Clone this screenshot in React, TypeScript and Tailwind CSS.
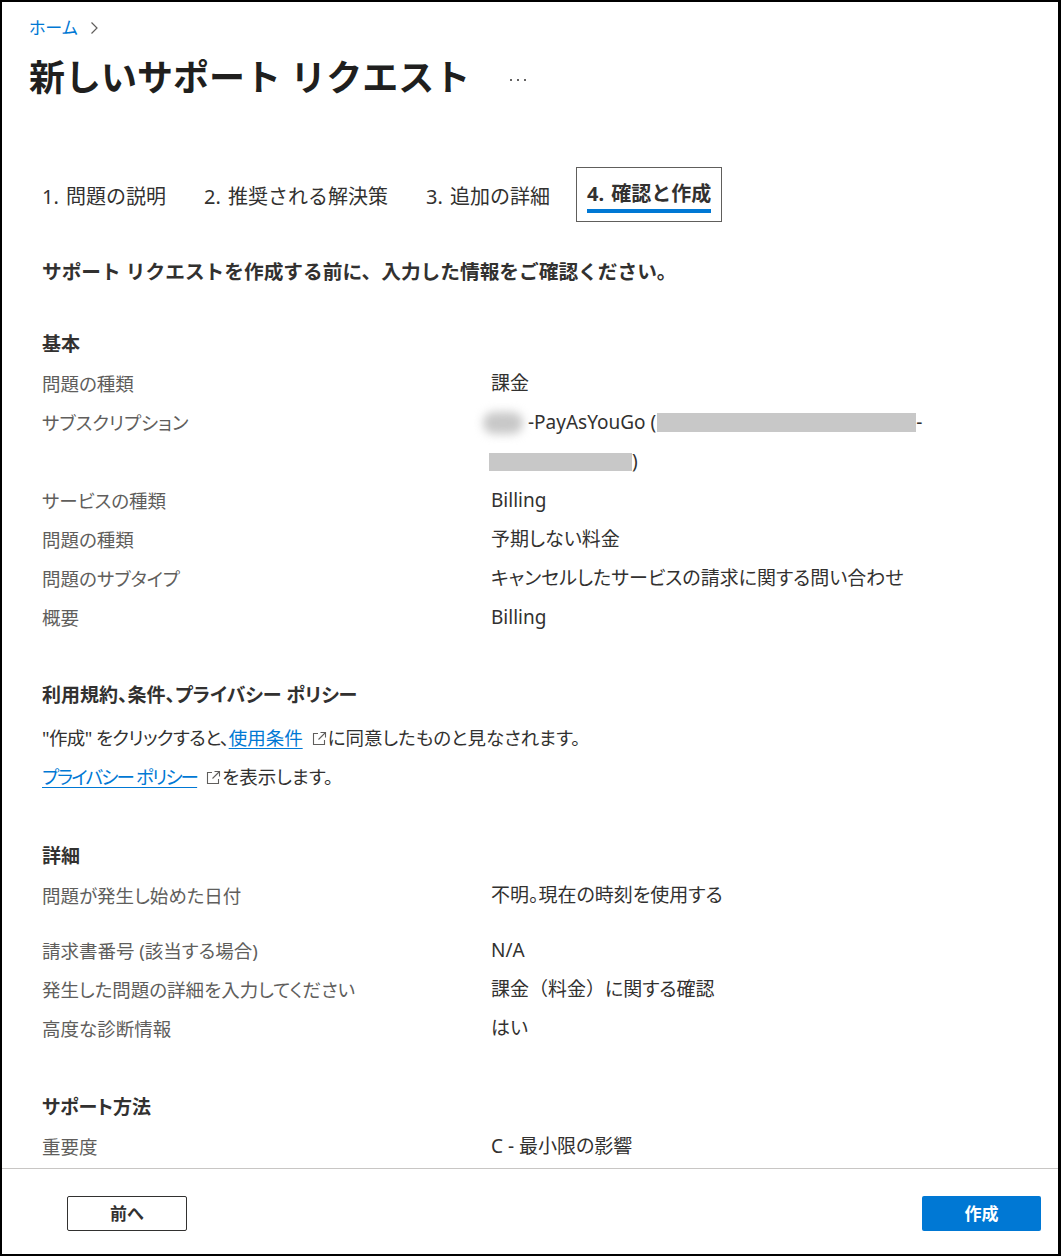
import React from "react";

const ExtIcon = () => (
  <svg width="15" height="15" viewBox="0 0 15 15" className="inline-block align-[-1px] ml-[9px] mr-[1px]" fill="none" stroke="#605e5c" strokeWidth="1.1">
    <path d="M6 2.5H1.5V13.5H12.5V9" />
    <path d="M8.5 1.5H13.5V6.5" />
    <path d="M13.5 1.5L6.5 8.5" />
  </svg>
);

const Row = ({ label, children, extra = "" }: { label: string; children: React.ReactNode; extra?: string }) => (
  <div className={`grid grid-cols-[449px_1fr] leading-[39px] ${extra}`}>
    <div className="text-[#605e5c] text-[18.5px]">{label}</div>
    <div className="text-[#323130] text-[19px]">{children}</div>
  </div>
);

const SectionTitle = ({ children, extra = "" }: { children: React.ReactNode; extra?: string }) => (
  <div className={`font-bold text-[19px] leading-[39px] text-[#323130] ${extra}`}>{children}</div>
);

export default function App() {
  return (
    <div className="w-[1061px] h-[1256px] border-2 border-r-[3px] border-black bg-white flex flex-col overflow-hidden font-['Noto_Sans','Noto_Sans_CJK_JP',sans-serif] text-[18px]">
      {/* header */}
      <div className="pl-[27px] pt-[14px]">
        <div className="flex items-center gap-[11px] text-[17px] leading-[24px] [font-feature-settings:'palt']">
          <span className="text-[#0078d4]">ホーム</span>
          <svg width="10" height="14" viewBox="0 0 10 14" fill="none" stroke="#605e5c" strokeWidth="1.2">
            <path d="M2.5 1.5L8 7L2.5 12.5" />
          </svg>
        </div>
        <div className="flex items-center mt-[16px]">
          <h1 className="font-bold text-[36px] leading-[44px] text-[#201f1e]">新しいサポート リクエスト</h1>
          <div className="ml-[40px] mt-[4px] flex gap-[5px]">
            <span className="w-[2px] h-[2px] rounded-full bg-[#323130]" />
            <span className="w-[2px] h-[2px] rounded-full bg-[#323130]" />
            <span className="w-[2px] h-[2px] rounded-full bg-[#323130]" />
          </div>
        </div>
      </div>

      {/* tabs */}
      <div className="flex gap-[14px] pl-[28px] mt-[67px] text-[20px] text-[#323130] [word-spacing:2px]">
        {["1. 問題の説明", "2. 推奨される解決策", "3. 追加の詳細"].map((t) => (
          <div key={t} className="px-[11px] h-[55px] flex items-center pt-[4px] border border-transparent">
            {t}
          </div>
        ))}
        <div className="px-[10px] h-[55px] border border-[#605e5c] flex flex-col items-stretch">
          <div className="flex-1 flex items-end pb-0 font-bold">4. 確認と作成</div>
          <div className="h-[4px] bg-[#0078d4] mb-[8px]" />
        </div>
      </div>

      {/* content */}
      <div className="flex-1 overflow-hidden pl-[40px] pr-[20px] [font-feature-settings:'palt']">
        <div className="font-bold text-[19.7px] leading-[30px] text-[#323130] mt-[35px] [font-feature-settings:normal]">
          サポート リクエストを作成する前に、入力した情報をご確認ください。
        </div>

        <SectionTitle extra="mt-[38px]">基本</SectionTitle>
        <Row label="問題の種類">課金</Row>
        <Row label="サブスクリプション">
          <div className="flex items-center">
            <span className="inline-block w-[40px] h-[22px] rounded-full bg-[#c8c8c8] blur-[5px] -ml-[8px] mr-[5px]" />
            <span>-PayAsYouGo (</span>
            <span className="inline-block w-[259px] h-[19px] bg-[#c8c8c8] ml-[1px]" />
            <span>-</span>
          </div>
          <div className="flex items-center">
            <span className="inline-block w-[143px] h-[18px] bg-[#c8c8c8] -ml-[2px]" />
            <span>)</span>
          </div>
        </Row>
        <Row label="サービスの種類">Billing</Row>
        <Row label="問題の種類">予期しない料金</Row>
        <Row label="問題のサブタイプ">キャンセルしたサービスの請求に関する問い合わせ</Row>
        <Row label="概要">Billing</Row>

        <SectionTitle extra="mt-[39px]">利用規約、条件、プライバシー ポリシー</SectionTitle>
        <div className="leading-[39px] text-[#323130] text-[18.5px] mt-[3px]">
          <span className="tracking-[-0.6px]">"作成" をクリックすると、</span>
          <span className="text-[#0078d4] underline underline-offset-[3px]">使用条件</span>
          <ExtIcon />に同意したものと見なされます。
        </div>
        <div className="leading-[39px] text-[#323130] text-[18.5px]">
          <span className="text-[#0078d4] underline underline-offset-[3px] tracking-[-1.8px]">プライバシー ポリシー</span>
          <ExtIcon />を表示します。
        </div>

        <SectionTitle extra="mt-[41px]">詳細</SectionTitle>
        <Row label="問題が発生し始めた日付" extra="mb-[16px]">不明。現在の時刻を使用する</Row>
        <Row label="請求書番号 (該当する場合)">N/A</Row>
        <Row label="発生した問題の詳細を入力してください">
          <span className="[font-feature-settings:normal]">課金（料金）</span>に関する確認
        </Row>
        <Row label="高度な診断情報">はい</Row>

        <SectionTitle extra="mt-[40px]">サポート方法</SectionTitle>
        <Row label="重要度">C - 最小限の影響</Row>
      </div>

      {/* footer */}
      <div className="border-t border-[#c8c6c4] h-[86px] flex items-start justify-between pl-[65px] pr-[17px] pt-[27px]">
        <button className="w-[120px] h-[35px] border border-[#323130] rounded-[2px] bg-white text-[#323130] font-bold text-[17px]">
          前へ
        </button>
        <button className="w-[119px] h-[35px] rounded-[2px] bg-[#0078d4] text-white font-bold text-[17px]">
          作成
        </button>
      </div>
    </div>
  );
}
